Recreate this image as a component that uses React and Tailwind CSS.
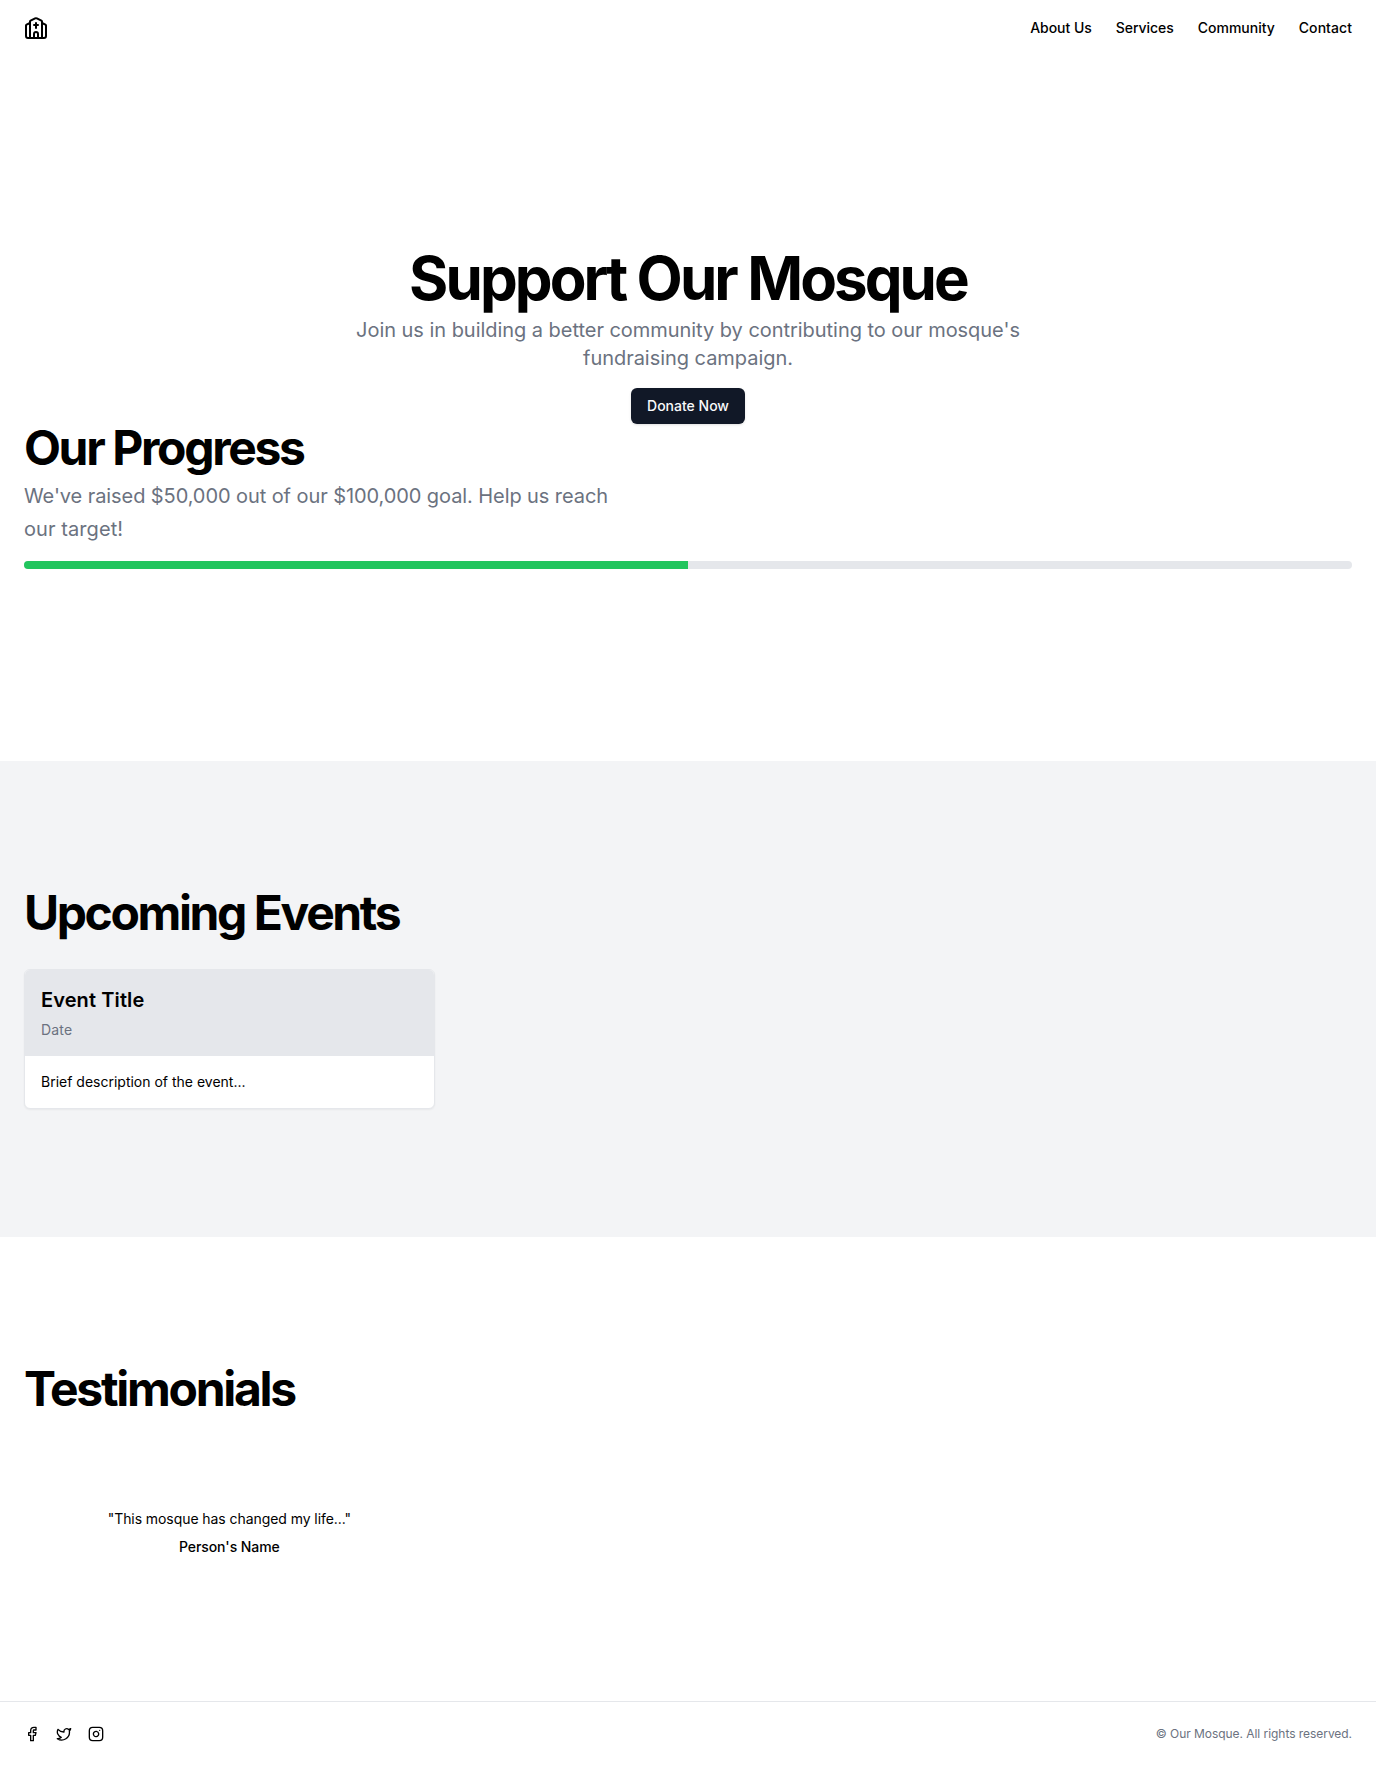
import React from "react";
import { Facebook, Twitter, Instagram } from "lucide-react";

const links = [
  { label: "About Us", tracking: "tracking-[-0.04px]" },
  { label: "Services", tracking: "tracking-[-0.04px]" },
  { label: "Community", tracking: "tracking-[0px]" },
  { label: "Contact", tracking: "tracking-[0.06px]" },
];

function ChurchIcon() {
  return (
    <svg className="h-6 w-6" viewBox="0 0 24 24" fill="none" stroke="currentColor" strokeWidth="2" strokeLinecap="round" strokeLinejoin="round">
      <path d="M10 9h4" />
      <path d="M12 7v5" />
      <path d="M14 22v-4a2 2 0 0 0-4 0v4" />
      <path d="M18 22V5.618a1 1 0 0 0-.553-.894l-4.553-2.277a2 2 0 0 0-1.788 0L6.553 4.724A1 1 0 0 0 6 5.618V22" />
      <path d="m18 7 3.447 1.724a1 1 0 0 1 .553.894V20a2 2 0 0 1-2 2H4a2 2 0 0 1-2-2V9.618a1 1 0 0 1 .553-.894L6 7" />
    </svg>
  );
}

function SectionTitle({ children, className = "tracking-tighter" }) {
  return <h2 className={`text-5xl leading-none font-bold ${className}`}>{children}</h2>;
}

export default function App() {
  return (
    <div className="flex min-h-[1766px] flex-col bg-white font-['Inter',sans-serif] text-black">
      <header className="flex h-14 items-center px-6">
        <a href="#" aria-label="Our Mosque">
          <ChurchIcon />
        </a>
        <nav className="ml-auto flex gap-6">
          {links.map(({ label, tracking }) => (
            <a key={label} href="#" className={`text-sm font-medium ${tracking}`}>{label}</a>
          ))}
        </nav>
      </header>
      <main className="flex-1">
        <section className="w-full py-48">
          <div className="px-6">
            <div className="flex flex-col items-center space-y-4 text-center">
              <div className="space-y-2">
                <h1 className="text-6xl leading-none font-bold tracking-[-2.92px]">Support Our Mosque</h1>
                <p className="mx-auto max-w-[700px] text-xl tracking-[-0.04px] text-[#6b7280]">
                  Join us in building a better community by contributing to our mosque's fundraising campaign.
                </p>
              </div>
              <button className="h-9 rounded-md bg-[#111827] px-4 text-sm font-medium text-[#f9fafb] shadow-sm">
                Donate Now
              </button>
            </div>
            <div className="space-y-4">
              <div className="space-y-2">
                <SectionTitle className="tracking-[-2.36px]">Our Progress</SectionTitle>
                <p className="max-w-[600px] text-xl/relaxed tracking-[-0.08px] text-[#6b7280]">
                  We've raised $50,000 out of our $100,000 goal. Help us reach{" "}
                  <span className="tracking-[0.08px]">our target!</span>
                </p>
              </div>
              <div className="h-2 overflow-hidden rounded bg-[#e5e7eb]">
                <div className="h-full w-1/2 bg-[#22c55e]" />
              </div>
            </div>
          </div>
        </section>
        <section className="w-full bg-[#f3f4f6] py-32">
          <div className="px-6">
            <SectionTitle>Upcoming Events</SectionTitle>
            <div className="mt-8 grid grid-cols-3 gap-12">
              <div className="overflow-hidden rounded-md border border-[#e5e7eb] bg-white shadow-xs">
                <div className="space-y-1.5 bg-[#e5e7eb] p-4">
                  <h3 className="text-xl font-semibold tracking-[0.1px]">Event Title</h3>
                  <p className="text-sm tracking-[0.2px] text-[#6b7280]">Date</p>
                </div>
                <div className="p-4">
                  <p className="text-sm">Brief description of the event...</p>
                </div>
              </div>
            </div>
          </div>
        </section>
        <section className="w-full py-32">
          <div className="px-6">
            <SectionTitle className="tracking-[-2.28px]">Testimonials</SectionTitle>
            <div className="mt-8 grid grid-cols-3 gap-12">
              <div className="flex flex-col items-center space-y-2 pt-16 text-sm tracking-[-0.07px]">
                <p>"This mosque has changed my life..."</p>
                <p className="font-medium">Person's Name</p>
              </div>
            </div>
          </div>
        </section>
      </main>
      <footer className="flex items-center justify-between border-t border-[#e5e7eb] px-6 py-6">
        <div className="flex gap-4">
          <Facebook className="h-4 w-4" />
          <Twitter className="h-4 w-4" />
          <Instagram className="h-4 w-4" />
        </div>
        <p className="text-xs tracking-[-0.05px] text-[#6b7280]">© Our Mosque. All rights reserved.</p>
      </footer>
    </div>
  );
}
